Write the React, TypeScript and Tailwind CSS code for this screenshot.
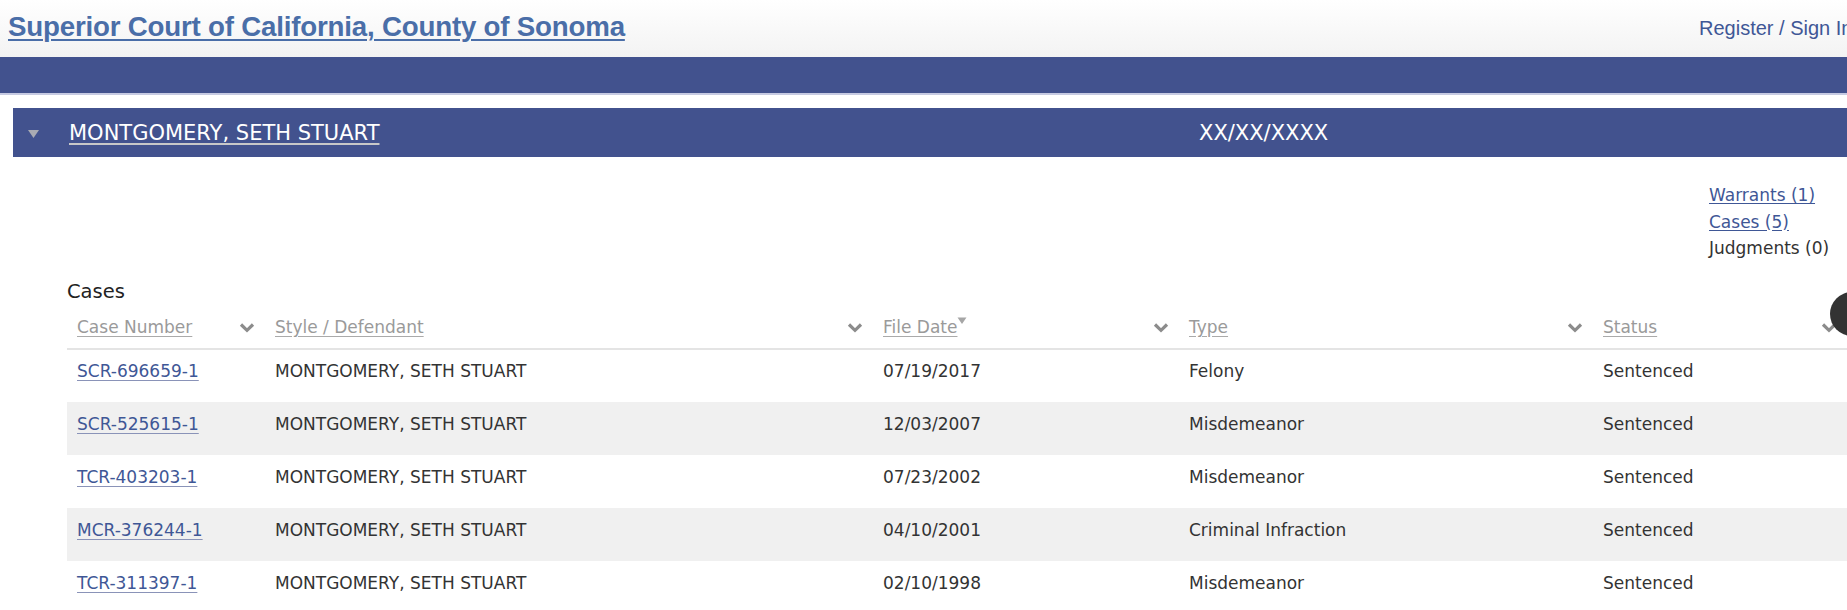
import React from 'react';

const cases = [
  { number: 'SCR-696659-1', defendant: 'MONTGOMERY, SETH STUART', filed: '07/19/2017', type: 'Felony', status: 'Sentenced' },
  { number: 'SCR-525615-1', defendant: 'MONTGOMERY, SETH STUART', filed: '12/03/2007', type: 'Misdemeanor', status: 'Sentenced' },
  { number: 'TCR-403203-1', defendant: 'MONTGOMERY, SETH STUART', filed: '07/23/2002', type: 'Misdemeanor', status: 'Sentenced' },
  { number: 'MCR-376244-1', defendant: 'MONTGOMERY, SETH STUART', filed: '04/10/2001', type: 'Criminal Infraction', status: 'Sentenced' },
  { number: 'TCR-311397-1', defendant: 'MONTGOMERY, SETH STUART', filed: '02/10/1998', type: 'Misdemeanor', status: 'Sentenced' },
];

const Chevron = () => (
  <svg width="16" height="11" viewBox="0 0 16 11" className="shrink-0">
    <path d="M2 2.5 L8 8.3 L14 2.5" fill="none" stroke="#8c8c8c" strokeWidth="3.2" />
  </svg>
);

const HeaderCell = ({ label, sorted, width }: { label: string; sorted?: boolean; width: string }) => (
  <th className={`${width} p-0 font-normal text-left`}>
    <div className="flex items-center justify-between px-[10px] h-[43px] pt-[3px]">
      <span className="flex items-start">
        <a className="text-[#9a9a9a] underline decoration-[#aaa] underline-offset-[3px]">{label}</a>
        {sorted && (
          <svg width="10" height="8" viewBox="0 0 10 8" className="mt-[2px]">
            <path d="M0.5 0.5 L9.5 0.5 L5 7 Z" fill="#a6a6a6" />
          </svg>
        )}
      </span>
      <Chevron />
    </div>
  </th>
);

export default function App() {
  return (
    <div className="relative w-[1847px] h-[610px] overflow-hidden bg-white" style={{ fontFamily: '"DejaVu Sans", Verdana, sans-serif' }}>
      {/* Top header */}
      <div className="h-[57px] bg-gradient-to-b from-white to-[#f3f3f3] flex items-center pl-[8px]" style={{ fontFamily: '"Liberation Sans", Arial, sans-serif' }}>
        <a className="text-[27.7px] font-bold text-[#4a6ea8] underline decoration-[2px] underline-offset-[3px] tracking-[-0.2px] leading-none pb-[4px]">
          Superior Court of California, County of Sonoma
        </a>
        <div className="ml-auto w-[148px] overflow-hidden whitespace-nowrap text-[20px] text-[#3f5796] pb-[2px]">
          Register / Sign In
        </div>
      </div>

      {/* Blue band */}
      <div className="h-[38px] bg-[#42528e] border-b-2 border-[#c6cae2]" />

      {/* Party bar */}
      <div className="ml-[13px] mt-[13px] h-[49px] pt-[3px] bg-[#42528e] flex items-center text-white text-[21px]">
        <svg width="11" height="8" viewBox="0 0 11 8" className="ml-[15px]">
          <path d="M0 0 L11 0 L5.5 8 Z" fill="#a9abb3" />
        </svg>
        <a className="ml-[30px] underline decoration-[#c8c8c8] underline-offset-[3px] w-[1130px]">MONTGOMERY, SETH STUART</a>
        <span>XX/XX/XXXX</span>
      </div>

      {/* Summary links */}
      <div className="flex justify-end pr-[16px] mt-[25px] text-[17px] leading-[26.5px] text-[#333]">
        <div className="w-[122px] whitespace-nowrap">
          <a className="block text-[#3f5796] underline underline-offset-[2px]">Warrants (1)</a>
          <a className="block text-[#3f5796] underline underline-offset-[2px]">Cases (5)</a>
          <div>Judgments (0)</div>
        </div>
      </div>

      {/* Cases table */}
      <div className="pl-[67px] mt-[17px] text-[17px]">
        <div className="text-[#222] text-[19.5px] leading-[26px]">Cases</div>
        <table className="table-fixed w-[1780px] border-collapse">
          <thead>
            <tr className="border-b-2 border-[#e4e4e4]">
              <HeaderCell label="Case Number" width="w-[198px]" />
              <HeaderCell label="Style / Defendant" width="w-[608px]" />
              <HeaderCell label="File Date" sorted width="w-[306px]" />
              <HeaderCell label="Type" width="w-[414px]" />
              <HeaderCell label="Status" width="w-[254px]" />
            </tr>
          </thead>
          <tbody className="text-[#333]">
            {cases.map((c, i) => (
              <tr key={c.number} className={`h-[53px] ${i % 2 === 1 ? 'bg-[#f0f0f0]' : 'bg-white'}`}>
                <td className="px-[10px] pb-[7px]">
                  <a className="text-[#3f5796] underline decoration-[#8a93b8] underline-offset-[3px]">{c.number}</a>
                </td>
                <td className="px-[10px] pb-[7px]">{c.defendant}</td>
                <td className="px-[10px] pb-[7px]">{c.filed}</td>
                <td className="px-[10px] pb-[7px]">{c.type}</td>
                <td className="px-[10px] pb-[7px]">{c.status}</td>
              </tr>
            ))}
          </tbody>
        </table>
      </div>

      {/* Floating button peeking in from the right edge */}
      <div className="absolute left-[1830px] top-[292px] w-[44px] h-[44px] rounded-full bg-[#333]" />
    </div>
  );
}
